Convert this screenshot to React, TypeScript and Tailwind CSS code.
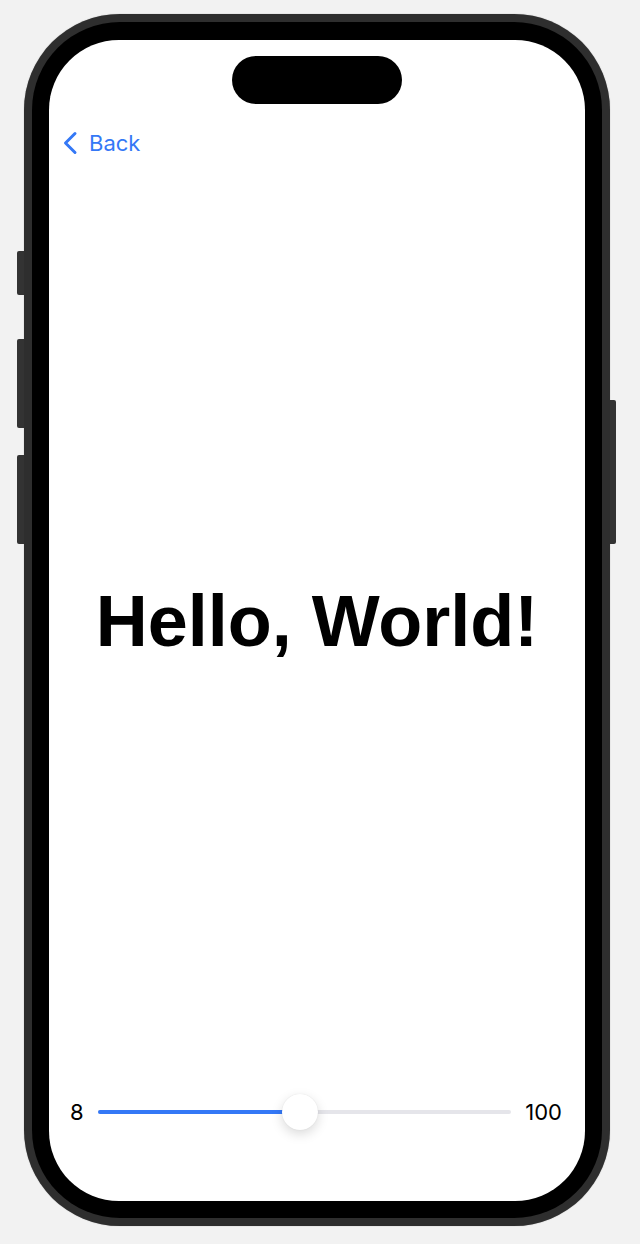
import React, { useState } from "react";

const BackChevron = () => (
  <svg width="16" height="24" viewBox="0 0 16 24" fill="none">
    <path
      d="M13 2.5 L3.5 12 L13 21.5"
      stroke="#3478f6"
      strokeWidth="3"
      strokeLinecap="round"
      strokeLinejoin="round"
    />
  </svg>
);

export default function App() {
  const [value] = useState(49);

  return (
    <div className="w-[640px] h-[1244px] bg-[#f2f2f2] pl-[24px] pt-[14px]">
      <div className="relative w-[586px] h-[1212px] rounded-[96px] bg-[#2e2e2e] p-[8px] shadow-[0_0_1px_rgba(0,0,0,0.4)]">
        {/* side buttons */}
        <div className="absolute left-[-7px] top-[237px] w-[7px] h-[44px] rounded-l-[2px] bg-[#333]" />
        <div className="absolute left-[-7px] top-[325px] w-[7px] h-[89px] rounded-l-[2px] bg-[#333]" />
        <div className="absolute left-[-7px] top-[441px] w-[7px] h-[89px] rounded-l-[2px] bg-[#333]" />
        <div className="absolute right-[-6px] top-[386px] w-[6px] h-[144px] rounded-r-[2px] bg-[#333]" />

        <div className="w-full h-full rounded-[88px] bg-black px-[17px] pt-[18px] pb-[17px]">
          <div className="w-full h-full rounded-[70px] bg-white flex flex-col overflow-hidden">
            <div className="mt-[16px] mx-auto w-[170px] h-[48px] rounded-full bg-black" />

            <div
              className="mt-[25px] h-[28px] flex items-center pl-[13px] gap-[11px] text-[22px] text-[#3478f6]"
              style={{ fontFamily: '"Inter", "Liberation Sans", sans-serif' }}
            >
              <BackChevron />
              <span>Back</span>
            </div>

            <div className="flex-1 flex items-center justify-center pb-[9px]">
              <h1
                className="text-[72px] font-bold text-black leading-none"
                style={{ fontFamily: '"Liberation Sans", Arial, sans-serif' }}
              >
                Hello, World!
              </h1>
            </div>

            <div
              className="mb-[71px] h-[36px] flex items-center pl-[21px] pr-[23px] gap-[14px] text-[22px] text-black"
              style={{ fontFamily: '"Inter", "Liberation Sans", sans-serif' }}
            >
              <span>8</span>
              <div className="relative flex-1 h-[4px] rounded-full bg-[#e5e5ea]">
                <div
                  className="absolute left-0 top-0 h-full rounded-full bg-[#3478f6]"
                  style={{ width: `${value}%` }}
                />
                <div
                  className="absolute top-1/2 w-[36px] h-[36px] -translate-x-1/2 -translate-y-1/2 rounded-full bg-white shadow-[0_4px_12px_rgba(0,0,0,0.15),0_0_1px_rgba(0,0,0,0.12)]"
                  style={{ left: `${value}%` }}
                />
              </div>
              <span>100</span>
            </div>
          </div>
        </div>
      </div>
    </div>
  );
}
